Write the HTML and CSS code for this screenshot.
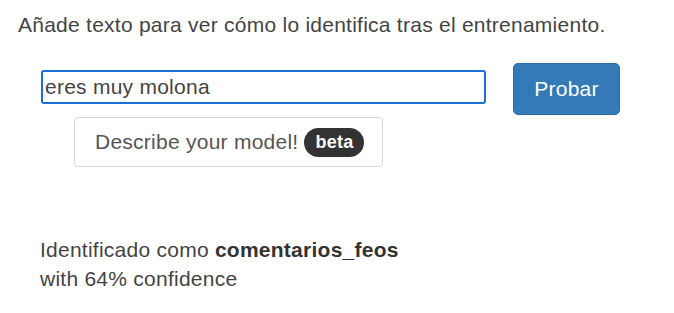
FILE: index.html
```html
<!DOCTYPE html>
<html lang="es">
<head>
    <meta charset="UTF-8">
    <title>Probar modelo</title>
    <link rel="stylesheet" href="styles.css">
</head>
<body>
    <div class="panel">
        <p class="intro">Añade texto para ver cómo lo identifica tras el entrenamiento.</p>
        <div class="test-row">
            <div class="test-col">
                <input type="text" class="test-input" value="eres muy molona">
                <button class="describe">Describe your model! <span class="badge">beta</span></button>
            </div>
            <button class="probar">Probar</button>
        </div>
        <div class="result">
            <p>Identificado como <strong>comentarios_feos</strong></p>
            <p>with 64% confidence</p>
        </div>
    </div>
</body>
</html>
```

FILE: styles.css
```css
body {
    margin: 0;
    font-family: 'Liberation Sans', Arial, sans-serif;
    font-size: 21px;
    letter-spacing: 0.25px;
    color: #444;
    background: #fff;
}
.panel {
    padding: 11px 18px;
}
.intro {
    margin: 0;
    line-height: 28px;
}
.test-row {
    display: flex;
    align-items: flex-start;
    margin-top: 24px;
    padding-left: 23px;
}
.test-col {
    display: flex;
    flex-direction: column;
    align-items: flex-start;
}
.test-input {
    width: 445px;
    height: 34px;
    box-sizing: border-box;
    margin-top: 7px;
    padding: 0 2px;
    border: 2px solid #1a6fd8;
    border-radius: 3px;
    font-family: inherit;
    font-size: 21px;
    letter-spacing: 0.25px;
    color: #444;
    outline: none;
}
.describe {
    margin: 13px 0 0 33px;
    width: 309px;
    height: 50px;
    padding: 0 0 0 20px;
    display: flex;
    align-items: center;
    gap: 6px;
    white-space: nowrap;
    background: #fff;
    border: 1px solid #d8d8d8;
    border-radius: 4px;
    font-family: inherit;
    font-size: 21px;
    letter-spacing: 0.25px;
    color: #555;
}
.badge {
    display: inline-block;
    padding: 4px 11px;
    border-radius: 15px;
    background: #333;
    color: #fff;
    font-size: 18px;
    font-weight: bold;
}
.probar {
    margin-left: 27px;
    width: 107px;
    height: 52px;
    border: 1px solid #2e6da4;
    border-radius: 5px;
    background: #337ab7;
    color: #fff;
    font-family: inherit;
    font-size: 21px;
    letter-spacing: 0.25px;
}
.result {
    margin-top: 68px;
    padding-left: 22px;
    line-height: 29px;
}
.result p {
    margin: 0;
}
.result strong {
    color: #333;
}
```
